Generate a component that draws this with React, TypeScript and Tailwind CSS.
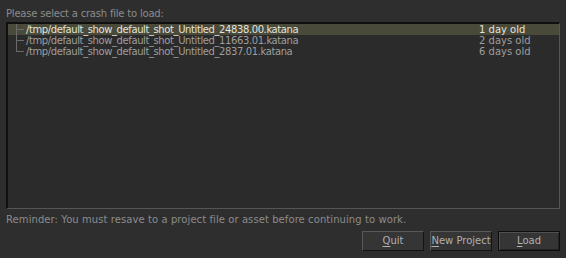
import React from "react";

const files = [
    { path: "/tmp/default_show_default_shot_Untitled_24838.00.katana", age: "1 day old" },
    { path: "/tmp/default_show_default_shot_Untitled_11663.01.katana", age: "2 days old" },
    { path: "/tmp/default_show_default_shot_Untitled_2837.01.katana", age: "6 days old" },
];

const Btn = ({ label, u, def }: { label: string; u: number; def?: boolean }) => (
    <button
        className={`h-[20px] w-[62px] bg-[#353535] text-[10px] text-[#b0b0b0] leading-none border ${
            def
                ? "border-[#0e0e0e] shadow-[inset_1px_1px_0_#505050,inset_-1px_-1px_0_#222222]"
                : "border-t-[#585858] border-l-[#585858] border-b-[#141414] border-r-[#141414]"
        }`}
    >
        {label.slice(0, u)}
        <span className="underline underline-offset-2">{label[u]}</span>
        {label.slice(u + 1)}
    </button>
);

export default function App() {
    return (
        <div
            className="w-[566px] h-[258px] bg-[#2e2e2e] flex flex-col px-[6px] pt-[7px] text-[10px] text-[#9e9e9e]"
            style={{ fontFamily: '"DejaVu Sans", sans-serif' }}
        >
            <div className="h-[15px] leading-[13px] text-[#8c8c8c] tracking-[-0.2px]">
                Please select a crash file to load:
            </div>
            <div className="h-[187px] bg-[#2b2b2b] border-t-2 border-l-2 border-t-[#101010] border-l-[#101010] border-r border-b border-r-[#555555] border-b-[#555555]">
                {files.map((f, i) => (
                    <div
                        key={f.path}
                        className={`flex h-[11px] items-center leading-[11px] ${
                            i === 0 ? "bg-[#4a4a3a] text-[#e4e4dc]" : ""
                        }`}
                    >
                        <div className="relative w-[18px] h-full shrink-0">
                            <div
                                className={`absolute left-[8px] top-0 w-px bg-[#6a6a6a] ${
                                    i === files.length - 1 ? "h-[6px]" : "h-full"
                                }`}
                            />
                            <div className="absolute left-[8px] top-[5px] h-px w-[8px] bg-[#6a6a6a]" />
                        </div>
                        <div className="flex-1 tracking-[-0.4px]">{f.path}</div>
                        <div className="w-[80px]">{f.age}</div>
                    </div>
                ))}
            </div>
            <div className="h-[17px] pt-[5px] leading-[12px] text-[#8c8c8c] tracking-[0.08px]">
                Reminder: You must resave to a project file or asset before continuing to work.
            </div>
            <div className="flex justify-end gap-[6px] pt-[5px]">
                <Btn label="Quit" u={0} />
                <Btn label="New Project" u={0} />
                <Btn label="Load" u={0} def />
            </div>
        </div>
    );
}
